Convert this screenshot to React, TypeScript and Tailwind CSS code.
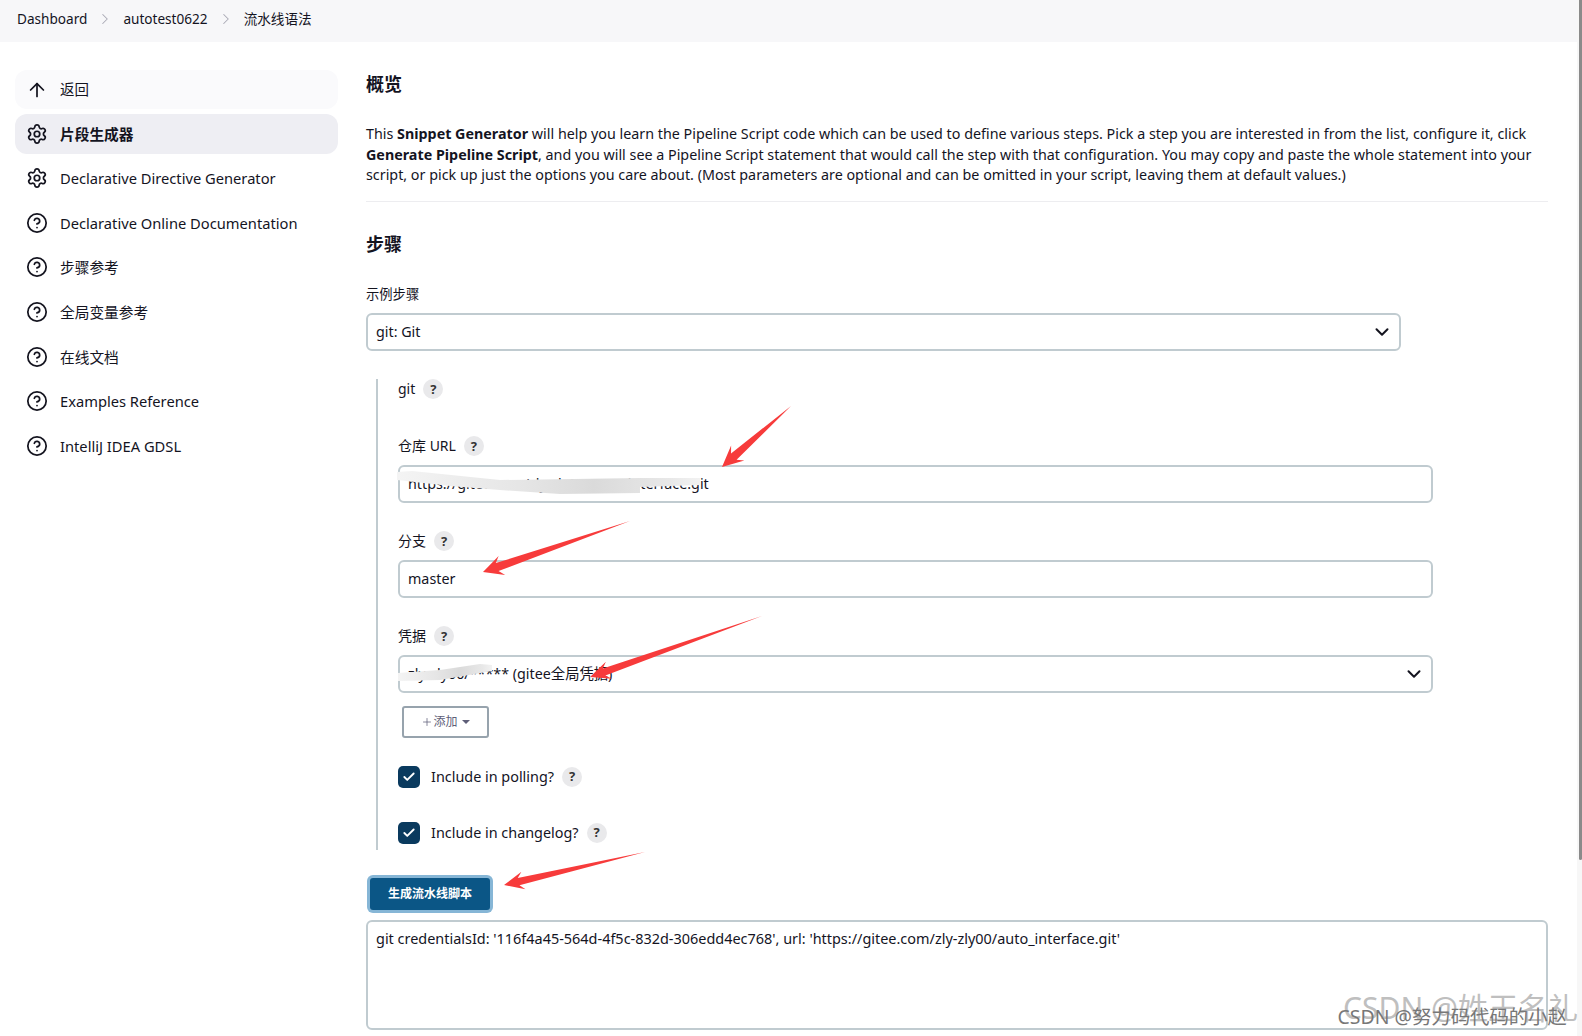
import { ReactNode } from "react";
import { ArrowUp, ChevronDown, ChevronRight, CircleHelp, Check, Plus, Settings } from "lucide-react";

const font = { fontFamily: '"Noto Sans", "Noto Sans CJK SC", sans-serif' };

const navItems = [
  { label: "片段生成器", icon: "gear", active: true },
  { label: "Declarative Directive Generator", icon: "gear" },
  { label: "Declarative Online Documentation", icon: "help" },
  { label: "步骤参考", icon: "help" },
  { label: "全局变量参考", icon: "help" },
  { label: "在线文档", icon: "help" },
  { label: "Examples Reference", icon: "help" },
  { label: "IntelliJ IDEA GDSL", icon: "help" },
];

function HelpDot() {
  return (
    <span className="ml-2 flex h-5 w-5 items-center justify-center rounded-full bg-[#e9e9eb] text-[13px] font-bold text-[#333]">
      ?
    </span>
  );
}

function Label({ children }: { children: ReactNode }) {
  return <div className="flex h-5 items-center text-sm leading-5">{children}</div>;
}

function Field({ children }: { children: ReactNode }) {
  return (
    <div className="flex h-[38px] items-center justify-between rounded-md border-2 border-[#c0cbd0] bg-white pl-2 pr-1.5 text-[14.3px]">
      {children}
    </div>
  );
}

// screenshot annotation arrows, coords are page pixels
function arrowPoints(tx: number, ty: number, hx: number, hy: number, headLen: number, headW: number) {
  const len = Math.hypot(hx - tx, hy - ty);
  const ux = (hx - tx) / len;
  const uy = (hy - ty) / len;
  const nx = -uy;
  const ny = ux;
  const bx = hx - ux * headLen;
  const by = hy - uy * headLen;
  const nbx = hx - ux * headLen * 0.75;
  const nby = hy - uy * headLen * 0.75;
  const p = [
    [tx, ty],
    [nbx + nx * headW * 0.42, nby + ny * headW * 0.42],
    [bx + nx * headW, by + ny * headW],
    [hx, hy],
    [bx - nx * headW, by - ny * headW],
    [nbx - nx * headW * 0.42, nby - ny * headW * 0.42],
  ];
  return p.map((q) => q.join(",")).join(" ");
}

function Annotations() {
  return (
    <svg className="pointer-events-none absolute left-0 top-0" width="1582" height="1036">
      <defs>
        <linearGradient id="smudge" x1="0" x2="1" y1="0" y2="0">
          <stop offset="0" stopColor="#f4f4f4" />
          <stop offset="0.4" stopColor="#e6e6e6" />
          <stop offset="0.65" stopColor="#dadada" />
          <stop offset="0.9" stopColor="#e8e8e8" />
          <stop offset="1" stopColor="#f2f2f2" />
        </linearGradient>
      </defs>
      <polygon points="397,472 412,471 500,480 640,478 700,478 700,485 640,487 640,493 560,494 500,490 450,486 397,480" fill="url(#smudge)" />
      <polygon points="398,673 440,670 480,664 492,665 492,671 440,680 398,681" fill="url(#smudge)" />
      <polygon points={arrowPoints(791, 406, 722, 467, 21, 10)} fill="#f73b3b" />
      <polygon points={arrowPoints(630, 521, 483, 572, 20, 10)} fill="#f73b3b" />
      <polygon points={arrowPoints(762, 616, 590, 677, 20, 9)} fill="#f73b3b" />
      <polygon points={arrowPoints(645, 852, 504, 885, 20, 9)} fill="#f73b3b" />
    </svg>
  );
}

export default function App() {
  return (
    <div className="relative h-[1036px] w-[1582px] overflow-hidden bg-white text-[#14141f]" style={font}>
      {/* Breadcrumb */}
      <div className="flex h-[42px] items-center bg-[#f7f7f9] pb-1 pl-[17px] text-[13.6px]">
        <span>Dashboard</span>
        <ChevronRight className="mx-[9px] h-[18px] w-[18px] text-[#a9a9b5]" strokeWidth={1.4} />
        <span>autotest0622</span>
        <ChevronRight className="mx-[9px] h-[18px] w-[18px] text-[#a9a9b5]" strokeWidth={1.4} />
        <span>流水线语法</span>
      </div>

      <div className="flex">
        {/* Sidebar */}
        <div className="ml-[15px] mt-[28px] flex w-[323px] shrink-0 flex-col gap-[4.6px]">
          <div className="flex h-[39px] items-center rounded-xl bg-[#fafafc] pl-[11px] text-[14.5px]">
            <ArrowUp className="mr-3 h-[22px] w-[22px]" strokeWidth={1.9} />
            返回
          </div>
          {navItems.map((item) => (
            <div
              key={item.label}
              className={`flex h-10 items-center rounded-xl pl-[11px] text-[14.7px] ${
                item.active ? "bg-[#eeeef3] font-semibold" : ""
              }`}
            >
              {item.icon === "gear" ? (
                <Settings className="mr-3 h-[22px] w-[22px]" strokeWidth={1.9} />
              ) : (
                <CircleHelp className="mr-3 h-[22px] w-[22px]" strokeWidth={1.9} />
              )}
              {item.label}
            </div>
          ))}
        </div>

        {/* Main */}
        <div className="ml-7 w-[1182px] shrink-0">
          <h2 className="mt-[30px] text-lg font-bold leading-6">概览</h2>
          <p className="mt-[28px] border-b border-[#ededf0] pb-[15px] text-[14.32px] leading-[20.6px]">
            This <b>Snippet Generator</b> will help you learn the Pipeline Script code which can be used to define
            various steps. Pick a step you are interested in from the list, configure it, click{" "}
            <b>Generate Pipeline Script</b>, and you will see a Pipeline Script statement that would call the step with
            that configuration. You may copy and paste the whole statement into your script, or pick up just the
            options you care about. (Most parameters are optional and can be omitted in your script, leaving them at
            default values.)
          </p>
          <h2 className="mt-[30px] text-lg font-bold leading-6">步骤</h2>
          <div className="mt-[28px] text-[13.3px] leading-5">示例步骤</div>
          <div className="mt-[9px] w-[1035px]">
            <Field>
              <span>git: Git</span>
              <ChevronDown className="h-[22px] w-[22px]" strokeWidth={2.2} />
            </Field>
          </div>

          <div className="ml-[10px] mt-[28px] h-[471px] w-[1057px] border-l-2 border-[#c0cbd0] pl-5">
            <div className="flex">
              <Label>
                git
                <HelpDot />
              </Label>
            </div>
            <div className="mt-[37px]">
              <Label>
                仓库 URL
                <HelpDot />
              </Label>
            </div>
            <div className="mt-[9px]">
              <Field>
                <span>https://gitee.com/zly-zly00/auto_interface.git</span>
              </Field>
            </div>
            <div className="mt-[28px]">
              <Label>
                分支
                <HelpDot />
              </Label>
            </div>
            <div className="mt-[9px]">
              <Field>
                <span>master</span>
              </Field>
            </div>
            <div className="mt-[28px]">
              <Label>
                凭据
                <HelpDot />
              </Label>
            </div>
            <div className="mt-[9px]">
              <Field>
                <span>zly-zly00/***** (gitee全局凭据)</span>
                <ChevronDown className="h-[22px] w-[22px]" strokeWidth={2.2} />
              </Field>
            </div>
            <div className="ml-1 mt-[13px] flex h-8 w-[87px] items-center justify-center rounded-[3px] border-2 border-[#97a3ad] text-xs text-[#5e5e78]">
              <Plus className="h-3 w-3" strokeWidth={1.5} />
              添加
              <span className="ml-1 h-0 w-0 border-x-[4px] border-t-[4px] border-x-transparent border-t-[#5e5e78]" />
            </div>
            <div className="mt-7 flex h-[22px] items-center text-[14.4px]">
              <span className="mr-[11px] flex h-[22px] w-[22px] items-center justify-center rounded-[5px] bg-[#0a3a5e]">
                <Check className="h-[14px] w-[14px] text-white" strokeWidth={3.2} />
              </span>
              Include in polling?
              <HelpDot />
            </div>
            <div className="mt-[34px] flex h-[22px] items-center text-[14.4px]">
              <span className="mr-[11px] flex h-[22px] w-[22px] items-center justify-center rounded-[5px] bg-[#0a3a5e]">
                <Check className="h-[14px] w-[14px] text-white" strokeWidth={3.2} />
              </span>
              Include in changelog?
              <HelpDot />
            </div>
          </div>

          <div className="ml-1 mt-[28px] flex h-8 w-[120px] items-center justify-center rounded-[3px] bg-[#0b5686] text-xs font-bold text-white ring-[3px] ring-[#86b6d6]">
            生成流水线脚本
          </div>
          <div className="mt-[10px] h-[110px] rounded-md border-2 border-[#c0cbd0] px-2 py-[7px] text-[14.45px] leading-5">
            git credentialsId: '116f4a45-564d-4f5c-832d-306edd4ec768', url: 'https://gitee.com/zly-zly00/auto_interface.git'
          </div>
        </div>
      </div>

      {/* Scrollbar */}
      <div className="absolute right-0 top-0 h-full w-[5px] bg-[#f7f7f7]">
        <div className="ml-auto h-[860px] w-[3px] rounded-b-sm bg-[#8a8a8a]" />
      </div>

      <Annotations />

      {/* Watermarks */}
      <div className="absolute right-[4px] top-[988px] text-[30px] leading-10 text-[#bfbfbf]">CSDN @姓王名礼</div>
      <div className="absolute right-[15px] top-[1005px] text-[19.4px] leading-6 text-[#777]">CSDN @努力码代码的小赵</div>
    </div>
  );
}
